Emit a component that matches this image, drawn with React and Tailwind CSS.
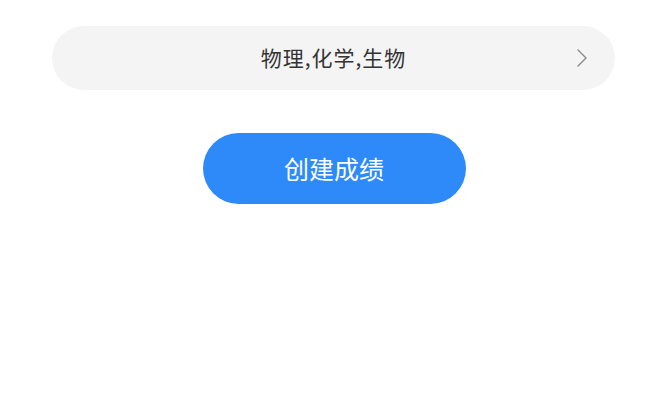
import React from 'react';

const App = () => {
  return (
    <div
      className="w-[670px] h-[415px] bg-white flex flex-col items-center pt-[26px]"
      style={{ fontFamily: '"Noto Sans CJK SC", "Noto Sans", sans-serif' }}
    >
      <div className="relative w-[563px] h-[64px] rounded-full bg-[#f4f4f4] flex items-center justify-center ml-[-3px]">
        <span className="text-[21px] tracking-[1px] text-[#333333]">物理,化学,生物</span>
        <svg
          className="absolute right-[27px] top-1/2 -translate-y-1/2"
          width="12"
          height="20"
          viewBox="0 0 12 20"
          fill="none"
        >
          <path d="M2 2 L10 10 L2 18" stroke="#8a8a8a" strokeWidth="1.4" strokeLinecap="round" strokeLinejoin="round" />
        </svg>
      </div>
      <button className="mt-[43px] ml-[-2px] w-[263px] h-[71px] rounded-full bg-[#2d8af8] text-white text-[25px] flex items-center justify-center">
        创建成绩
      </button>
    </div>
  );
};

export default App;
